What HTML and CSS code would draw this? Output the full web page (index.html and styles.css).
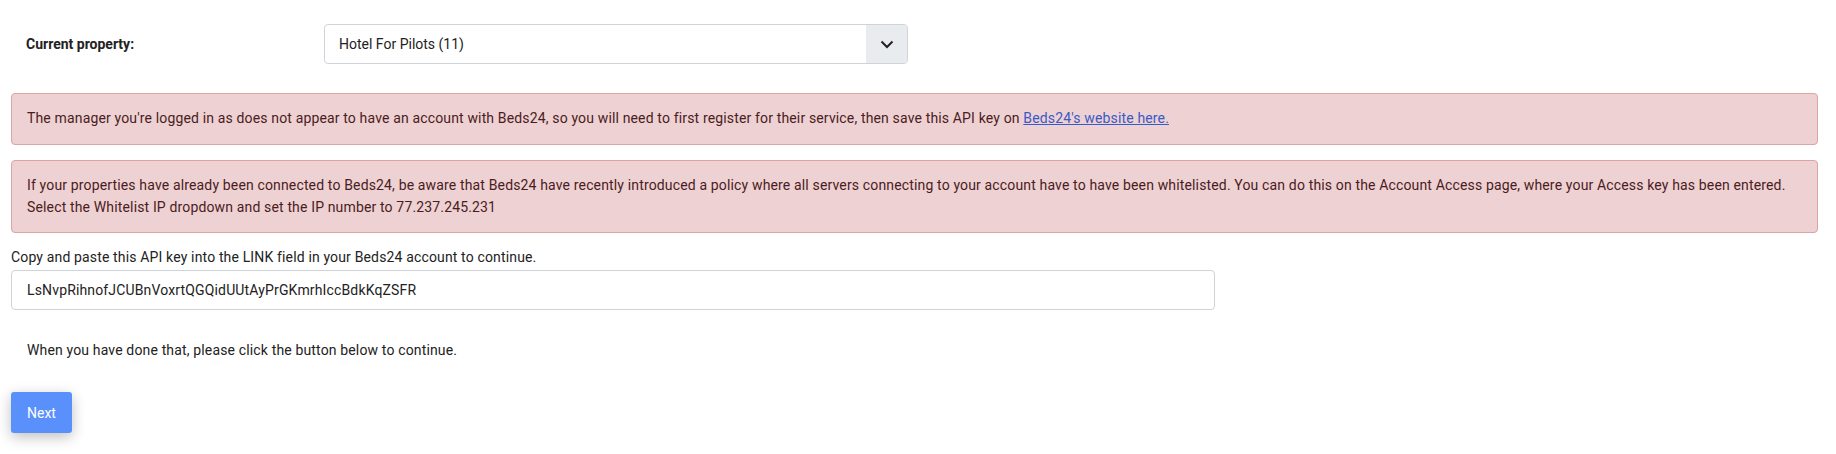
FILE: index.html
```html
<!DOCTYPE html>
<html lang="en">
<head>
  <meta charset="UTF-8">
  <meta name="viewport" content="width=device-width, initial-scale=1.0">
  <title>Beds24 Connection</title>
  <link rel="stylesheet" href="styles.css">
</head>
<body>
  <div class="container">
    <div class="property-row">
      <label for="property">Current property:</label>
      <div class="select-wrap">
        <div class="select-value" id="property">Hotel For Pilots (11)</div>
        <div class="select-btn">
          <svg width="14" height="9" viewBox="0 0 14 9"><path d="M1.5 1.5 L7 7 L12.5 1.5" fill="none" stroke="#222" stroke-width="2"/></svg>
        </div>
      </div>
    </div>

    <div class="alert">
      The manager you're logged in as does not appear to have an account with Beds24, so you will need to first register for their service, then save this API key on <a href="#">Beds24's website here.</a>
    </div>

    <div class="alert alert-long">
      If your properties have already been connected to Beds24, be aware that Beds24 have recently introduced a policy where all servers connecting to your account have to have been whitelisted. You can do this on the Account Access page, where your Access key has been entered.<br>
      Select the Whitelist IP dropdown and set the IP number to 77.237.245.231
    </div>

    <p class="hint">Copy and paste this API key into the LINK field in your Beds24 account to continue.</p>
    <input type="text" class="api-key" value="LsNvpRihnofJCUBnVoxrtQGQidUUtAyPrGKmrhIccBdkKqZSFR" readonly>

    <p class="note">When you have done that, please click the button below to continue.</p>

    <button class="btn-next">Next</button>
  </div>
</body>
</html>
```

FILE: styles.css
```css
* {
  box-sizing: border-box;
}
body {
  margin: 0;
  font-family: Roboto, 'Liberation Sans', sans-serif;
  font-size: 14px;
  line-height: 22px;
  letter-spacing: 0.15px;
  color: #212529;
  background: #fff;
}
.container {
  padding: 24px 18px 20px 11px;
}
.property-row {
  display: flex;
  align-items: center;
}
.property-row label {
  width: 313px;
  padding-left: 15px;
  font-weight: bold;
  letter-spacing: 0;
  color: #222;
}
.select-wrap {
  display: flex;
  width: 584px;
  height: 40px;
  border: 1px solid #ced4da;
  border-radius: 4px;
  overflow: hidden;
}
.select-value {
  flex: 1;
  padding: 0 14px;
  line-height: 38px;
  letter-spacing: 0;
  color: #222;
}
.select-btn {
  width: 41px;
  background: #e9ecef;
  display: flex;
  align-items: center;
  justify-content: center;
}
.alert {
  margin-top: 29px;
  padding: 13px 15px 15px;
  background: #eed1d2;
  border: 1px solid #dca5a3;
  border-radius: 4px;
  color: #4a1c22;
}
.alert + .alert {
  margin-top: 15px;
}
.alert-long {
  padding-bottom: 14px;
}
.alert a {
  color: #3a5ac6;
}
.hint {
  margin: 13px 0 2px;
  color: #222;
}
.api-key {
  display: block;
  width: 1204px;
  height: 40px;
  padding: 0 15px;
  border: 1px solid #ced4da;
  border-radius: 4px;
  font-family: inherit;
  font-size: 14px;
  letter-spacing: 0.15px;
  color: #222;
}
.note {
  margin: 29px 0 0;
  padding-left: 16px;
  color: #222;
}
.btn-next {
  margin-top: 31px;
  height: 41px;
  padding: 0 16px;
  border: none;
  border-radius: 3px;
  background: #5a90fb;
  color: #fff;
  font-family: inherit;
  font-size: 14px;
  box-shadow: 0 4px 14px rgba(0,0,0,0.25);
}
```
